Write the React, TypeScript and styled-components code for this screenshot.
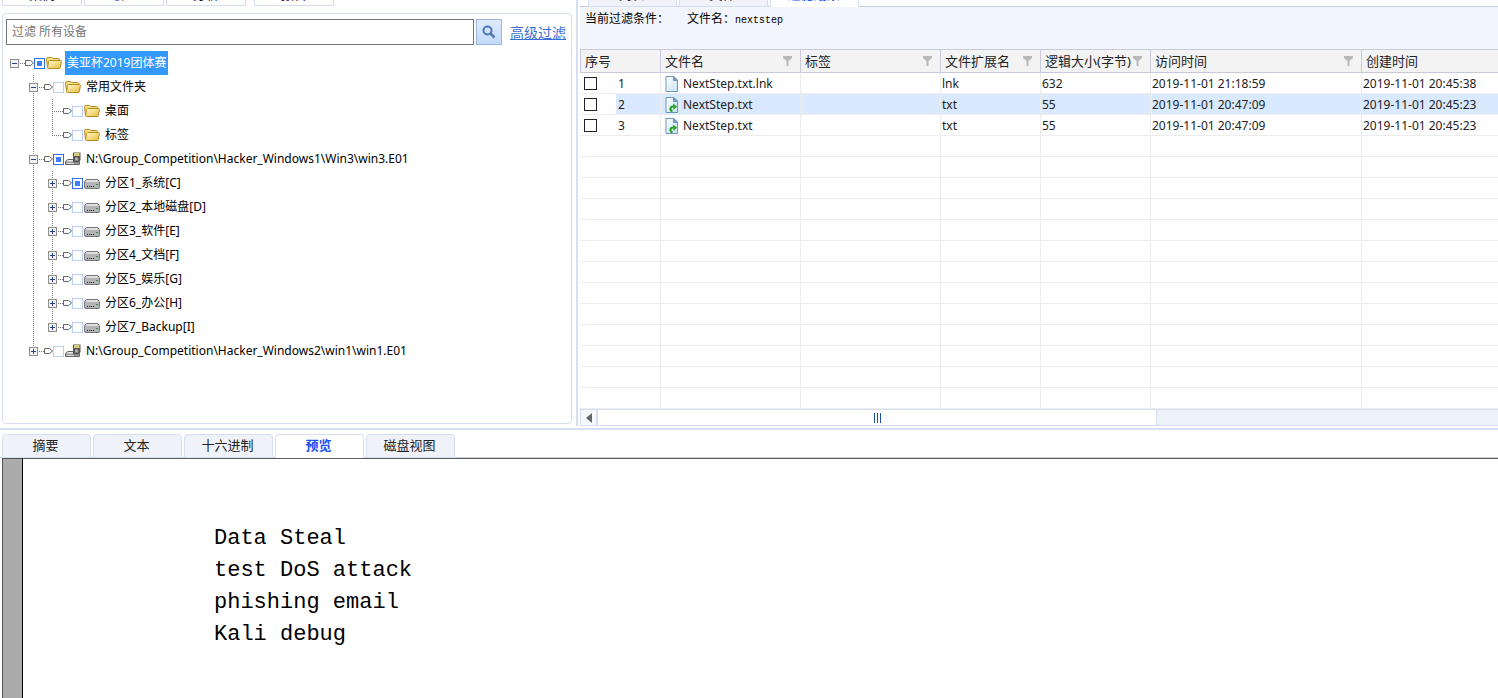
import React from "react";
import styled, { createGlobalStyle, css } from "styled-components";

const line = "#d5dff1";
const ui = `"Noto Sans", "Noto Sans CJK SC", sans-serif`;

const GlobalStyle = createGlobalStyle`
  *, *::before, *::after { box-sizing: border-box; }
  body { margin: 0; background: #fff; color: #000; font: 12px/16px ${ui}; }
  button, input { font: inherit; color: inherit; margin: 0; }
`;

const Page = styled.div`
  display: flex;
  flex-direction: column;
  min-height: 100vh;
  overflow: hidden;
`;

const Workspace = styled.div`
  display: grid;
  grid-template-columns: 578px minmax(0, 1fr);
  column-gap: 2px;
  padding-bottom: 2px;
  border-bottom: 2px solid ${line};
`;

/* ---------- device pane ---------- */

const DevicePane = styled.aside`
  display: flex;
  flex-direction: column;
  gap: 7px;
  padding: 0 4px 2px 2px;
  border-right: 2px solid ${line};
`;

const Toolbar = styled.div`
  display: flex;
  align-items: flex-end;
  gap: 2px;
  height: 6px;
  overflow: hidden;
`;

const ToolButton = styled.button<{ $apart?: boolean }>`
  flex: none;
  width: 80px;
  height: 24px;
  padding: 0;
  margin-left: ${(p) => (p.$apart ? 6 : 0)}px;
  border: 1px solid ${line};
  background: #fff;
  color: #222;
  font-size: 13px;
  line-height: 20px;
`;

const DevicePanel = styled.div`
  flex: 1;
  padding: 5px 5px 4px 3px;
  border: 1px solid ${line};
  border-radius: 4px;
`;

const SearchRow = styled.form`
  display: flex;
  align-items: center;
  gap: 2px;
`;

const SearchInput = styled.input`
  flex: 1;
  min-width: 0;
  height: 26px;
  padding: 0 5px 2px;
  border: 1px solid #767676;
  outline: none;
  &::placeholder { color: #757575; opacity: 1; }
`;

const SearchButton = styled.button`
  display: grid;
  place-items: center;
  width: 26px;
  height: 26px;
  padding: 0;
  border: 1px solid #9bb5dc;
  background: linear-gradient(#dfebfd, #c2dafb);
`;

const AdvancedLink = styled.a`
  margin-left: 6px;
  padding-top: 2px;
  color: #3c6fd6;
  font-size: 14px;
  line-height: 20px;
  text-decoration: underline;
`;

const Tree = styled.ul`
  margin: 6px 0 0 4px;
  padding: 0;
  list-style: none;
`;

const TreeRow = styled.li`
  display: flex;
  align-items: center;
  height: 24px;
`;

const Guide = styled.span<{ $drawn: boolean }>`
  flex: none;
  width: 19px;
  height: 24px;
  ${(p) =>
    p.$drawn &&
    css`
      background: repeating-linear-gradient(#777 0 1px, transparent 1px 2px) 4px 0 / 1px 24px no-repeat;
    `}
`;

const TreeLabel = styled.label`
  display: flex;
  align-items: center;
  gap: 1px;
`;

const TreeCheck = styled.input<{ $partial?: boolean }>`
  appearance: none;
  width: 11px;
  height: 11px;
  border: 1px solid ${(p) => (p.$partial ? "#2f6cf6" : "#b9cffb")};
  background: ${(p) => (p.$partial ? "#3d7dff" : "#fff")};
  box-shadow: inset 0 0 0 2px #fff;
`;

const TreeText = styled.span<{ $selected?: boolean }>`
  margin-left: 2px;
  padding: 0 2px;
  line-height: 24px;
  white-space: nowrap;
  background: ${(p) => (p.$selected ? "#3399ff" : "transparent")};
  color: ${(p) => (p.$selected ? "#fff" : "#000")};
`;

/* ---------- result pane ---------- */

const ResultPane = styled.main`
  min-width: 0;
`;

const TabStrip = styled.div<{ $clipped?: boolean }>`
  display: flex;
  align-items: flex-end;
  gap: 2px;
  height: ${(p) => (p.$clipped ? "7px" : "28px")};
  padding-left: ${(p) => (p.$clipped ? 8 : 2)}px;
  overflow: hidden;
  box-shadow: inset 0 -1px ${(p) => (p.$clipped ? "#c9ccdc" : "#ccd2e2")};
`;

const Tab = styled.button<{ $active?: boolean }>`
  flex: none;
  width: 89px;
  height: 24px;
  padding: 0 2px 2px 0;
  border: 1px solid ${line};
  border-bottom-color: ${(p) => (p.$active ? "#fff" : line)};
  border-radius: 4px 4px 0 0;
  background: ${(p) => (p.$active ? "#fff" : "#eff2f8")};
  color: ${(p) => (p.$active ? "#1b4ff0" : "#222")};
  font-size: 13px;
  font-weight: ${(p) => (p.$active ? 700 : 400)};
  line-height: 20px;
`;

const FilterBar = styled.div`
  display: flex;
  gap: 18px;
  height: 42px;
  padding: 5px 5px 4px;
  background: #f2f5fb;
  font-family: "Liberation Mono", "Noto Sans CJK SC", monospace;
`;

const Keyword = styled.span`
  font-size: 10px;
`;

const ResultTable = styled.table`
  width: 100%;
  table-layout: fixed;
  border-collapse: separate;
  border-spacing: 0;
  color: #222;
`;

const HeadCell = styled.th<{ $width?: number }>`
  width: ${(p) => (p.$width ? `${p.$width}px` : "auto")};
  height: 24px;
  padding: 0 8px 0 4px;
  border: solid #c9c9dc;
  border-width: 1px 1px 1px 0;
  background: #f3f3f3;
  font-size: 13px;
  font-weight: 400;
  line-height: 20px;
  text-align: left;
  &:first-child { border-left-width: 1px; }
  &:last-child { border-right-width: 0; }
`;

const HeadInner = styled.span`
  display: flex;
  align-items: center;
  justify-content: space-between;
  white-space: nowrap;
`;

const BodyRow = styled.tr<{ $selected?: boolean }>`
  background: ${(p) => (p.$selected ? "#d9e9ff" : "#fff")};
`;

const Cell = styled.td`
  height: 21px;
  padding: 2px 0 0 1px;
  border: solid #ececec;
  border-width: 0 1px 1px 0;
  line-height: 18px;
  white-space: nowrap;
  overflow: hidden;
  &:first-child { padding: 0; }
  &:last-child { border-right-width: 0; }
`;

const IndexLabel = styled.label`
  display: flex;
  height: 20px;
`;

const CheckSlot = styled.span`
  display: flex;
  align-items: center;
  width: 36px;
  padding-left: 4px;
  background: #fff;
`;

const RowCheck = styled.input`
  appearance: none;
  width: 13px;
  height: 13px;
  border: 1px solid #222;
  background: #fff;
`;

const IndexText = styled.span`
  padding: 2px 0 0 2px;
`;

const FileName = styled.span`
  display: flex;
  align-items: center;
  gap: 4px;
  padding-left: 3px;
`;

const ScrollBar = styled.div`
  display: flex;
  height: 17px;
  border: solid ${line};
  border-width: 1px 0 1px 1px;
  background: #edf1f8;
`;

const ScrollArrow = styled.button`
  display: grid;
  place-items: center;
  width: 17px;
  padding: 0;
  border: 0;
  border-right: 2px solid ${line};
  background: #f6f8fc;
`;

const ScrollThumb = styled.div`
  display: flex;
  align-items: center;
  justify-content: center;
  gap: 2px;
  width: 61%;
  border-right: 1px solid ${line};
  background: #fff;
`;

const Grip = styled.i`
  width: 1px;
  height: 10px;
  background: #1a4f9e;
`;

/* ---------- preview ---------- */

const PreviewArea = styled.section`
  display: flex;
  flex: 1;
  padding-left: 2px;
`;

const PageMargin = styled.div`
  width: 21px;
  border: solid #555;
  border-width: 1px 1px 0 1px;
  border-right-color: #000;
  background: #ababab;
`;

const Document = styled.pre`
  flex: 1;
  margin: 0;
  padding: 64px 191px 32px;
  border-top: 1px solid #5c5c62;
  background: #fff;
  color: #000;
  font: 22px/32px "Liberation Mono", monospace;
`;

/* ---------- icons ---------- */

type Fold = "open" | "closed" | "leaf";

const Branch = ({ fold, up, down }: { fold: Fold; up?: boolean; down?: boolean }) => (
  <svg width="24" height="24" viewBox="0 0 24 24" shapeRendering="crispEdges" aria-hidden="true">
    {up && <path d="M4.5 0V12" stroke="#777" strokeDasharray="1 1" />}
    {down && <path d="M4.5 12V24" stroke="#777" strokeDasharray="1 1" />}
    <path d={fold === "leaf" ? "M4 12.500H15" : "M10 12.500H15"} stroke="#777" strokeDasharray="1 1" />
    {fold !== "leaf" && (
      <>
        <rect x="0.5" y="8.500" width="8" height="8" rx="1" fill="#f4f4f4" stroke="#8c8c8c" />
        <path d="M2 12.500H7" stroke="#27418c" />
        {fold === "closed" && <path d="M4.5 10V15" stroke="#27418c" />}
      </>
    )}
    <path d="M15.500 9.500H20.500L23.500 12L20.500 14.500H15.500Z" fill="#fff" stroke="#666" shapeRendering="auto" />
  </svg>
);

const FolderIcon = () => (
  <svg width="16" height="16" viewBox="0 0 16 16" aria-hidden="true">
    <defs>
      <linearGradient id="folder" x1="0" y1="0" x2="1" y2="1">
        <stop offset="0" stopColor="#fffbd0" />
        <stop offset="1" stopColor="#e8bc3a" />
      </linearGradient>
    </defs>
    <path d="M1.500 12.500L.5 4Q.5 2.500 2 2.500H5.500Q6.500 2.500 7 3.500H12.500Q13.500 3.500 13.500 5V7" fill="#f9e38a" stroke="#b58a1c" />
    <path d="M3.500 5.500H14.500Q15.500 5.500 15.400 6.500L14.300 12.500Q14.100 13.500 13 13.500H2.500Q1.500 13.500 1.600 12.500L2.500 6.500Q2.600 5.500 3.500 5.500Z" fill="url(#folder)" stroke="#b58a1c" />
  </svg>
);

const DriveIcon = () => (
  <svg width="16" height="16" viewBox="0 0 16 16" aria-hidden="true">
    <path d="M2.500 4.500H13.500L15.500 6.500V12Q15.500 13.500 14 13.500H2Q.5 13.500 .5 12V6.500Z" fill="#b4b4b4" stroke="#777" />
    <path d="M3 5H13L14.500 7H1.500Z" fill="#dedede" />
    <path d="M3 11.500H4M5 11.500H6M7 11.500H8M9 11.500H10" stroke="#222" />
    <path d="M12 9.500H14" stroke="#4a7d3a" />
  </svg>
);

const ImageIcon = () => (
  <svg width="16" height="16" viewBox="0 0 16 16" aria-hidden="true">
    <path d="M3 8.500H9V10.500H14.500V13.500H.5V10.500Z" fill="#9d9d9d" stroke="#666" />
    <path d="M3 9H8L7.500 10.500H1.500Z" fill="#e8e8e8" />
    <path d="M2 12.500H9" stroke="#ddd" />
    <path d="M8 1.500H15.500V9L13.500 11.500H8Z" fill="#5a5a5a" />
    <path d="M9 2H14.500V5H9Z" fill="#d9cd7a" />
    <path d="M10 6.500H13V9.500H10Z" fill="#aaa" />
  </svg>
);

const FileIcon = ({ shortcut }: { shortcut?: boolean }) => (
  <svg width="14" height="16" viewBox="0 0 14 16" aria-hidden="true">
    <defs>
      <linearGradient id="paper" x1="0" y1="0" x2="1" y2="1">
        <stop offset="0" stopColor="#ffffff" />
        <stop offset="1" stopColor="#c9e1f8" />
      </linearGradient>
    </defs>
    <path d="M1 .5H9L12.500 4V15.500H1Z" fill="url(#paper)" stroke="#6f95bd" />
    <path d="M8.500 .5V4.500H12.500Z" fill="#7d9dc0" stroke="#6f95bd" />
    {shortcut && (
      <>
        <path d="M7.500 14.500C4.500 13.500 4.500 9.500 8.500 9.500" fill="none" stroke="#22a31a" strokeWidth="2" />
        <path d="M8 6.500L12 9.500L8.500 13Z" fill="#22a31a" />
      </>
    )}
  </svg>
);

const FunnelIcon = () => (
  <svg width="9" height="10" viewBox="0 0 9 10" aria-hidden="true">
    <path d="M0 0H9V2L5.500 5V10H3.500V5L0 2Z" fill="#b9b9b9" />
  </svg>
);

const SearchIcon = () => (
  <svg width="14" height="14" viewBox="0 0 14 14" fill="none" stroke="#4f76b4" aria-hidden="true">
    <circle cx="5.500" cy="5.500" r="4" strokeWidth="2" />
    <path d="M8.500 8.500L12.500 12.500" strokeWidth="2.500" />
  </svg>
);

/* ---------- data ---------- */

type Node = {
  text: string;
  level: 0 | 1 | 2;
  fold: Fold;
  icon: () => React.ReactElement;
  partial?: boolean;
  selected?: boolean;
  last?: boolean;
};

const partitions: Node[] = ["1_系统[C]", "2_本地磁盘[D]", "3_软件[E]", "4_文档[F]", "5_娱乐[G]", "6_办公[H]", "7_Backup[I]"].map(
  (name, i, all) => ({
    text: `分区${name}`,
    level: 2,
    fold: "closed",
    icon: DriveIcon,
    partial: i === 0,
    last: i === all.length - 1,
  })
);

const nodes: Node[] = [
  { text: "美亚杯2019团体赛", level: 0, fold: "open", icon: FolderIcon, partial: true, selected: true },
  { text: "常用文件夹", level: 1, fold: "open", icon: FolderIcon },
  { text: "桌面", level: 2, fold: "leaf", icon: FolderIcon },
  { text: "标签", level: 2, fold: "leaf", icon: FolderIcon, last: true },
  { text: "N:\\Group_Competition\\Hacker_Windows1\\Win3\\win3.E01", level: 1, fold: "open", icon: ImageIcon, partial: true },
  ...partitions,
  { text: "N:\\Group_Competition\\Hacker_Windows2\\win1\\win1.E01", level: 1, fold: "closed", icon: ImageIcon, last: true },
];

const columns = [
  { title: "序号", width: 81 },
  { title: "文件名", width: 140, filter: true },
  { title: "标签", width: 140, filter: true },
  { title: "文件扩展名", width: 100, filter: true },
  { title: "逻辑大小(字节)", width: 110, filter: true },
  { title: "访问时间", width: 211, filter: true },
  { title: "创建时间" },
];

const files = [
  { name: "NextStep.txt.lnk", ext: "lnk", size: 632, accessed: "2019-11-01 21:18:59", created: "2019-11-01 20:45:38" },
  { name: "NextStep.txt", ext: "txt", size: 55, accessed: "2019-11-01 20:47:09", created: "2019-11-01 20:45:23", selected: true },
  { name: "NextStep.txt", ext: "txt", size: 55, accessed: "2019-11-01 20:47:09", created: "2019-11-01 20:45:23" },
];

const emptyRows = Array.from({ length: 13 }, (_, i) => i);

export default function App() {
  return (
    <Page>
      <GlobalStyle />
      <Workspace>
        <DevicePane>
          <Toolbar>
            <ToolButton>案例</ToolButton>
            <ToolButton>取证</ToolButton>
            <ToolButton>分析</ToolButton>
            <ToolButton $apart>报告</ToolButton>
          </Toolbar>
          <DevicePanel>
            <SearchRow onSubmit={(e) => e.preventDefault()}>
              <SearchInput type="text" placeholder="过滤 所有设备" aria-label="过滤 所有设备" />
              <SearchButton type="submit" aria-label="过滤">
                <SearchIcon />
              </SearchButton>
              <AdvancedLink href="#advanced">高级过滤</AdvancedLink>
            </SearchRow>
            <Tree>
              {nodes.map(({ icon: Icon, ...n }) => (
                <TreeRow key={n.text}>
                  {n.level > 0 && <Guide $drawn={false} />}
                  {n.level > 1 && <Guide $drawn />}
                  <Branch fold={n.fold} up={n.level > 0} down={n.level > 0 && !n.last} />
                  <TreeLabel>
                    <TreeCheck type="checkbox" $partial={n.partial} />
                    <Icon />
                    <TreeText $selected={n.selected}>{n.text}</TreeText>
                  </TreeLabel>
                </TreeRow>
              ))}
            </Tree>
          </DevicePanel>
        </DevicePane>

        <ResultPane>
          <TabStrip $clipped>
            <Tab>列表</Tab>
            <Tab>文件</Tab>
            <Tab $active>过滤结果</Tab>
          </TabStrip>
          <FilterBar>
            <span>当前过滤条件：</span>
            <span>
              文件名：<Keyword>nextstep</Keyword>
            </span>
          </FilterBar>
          <ResultTable>
            <thead>
              <tr>
                {columns.map((c) => (
                  <HeadCell key={c.title} $width={c.width} scope="col">
                    <HeadInner>
                      {c.title}
                      {c.filter && <FunnelIcon />}
                    </HeadInner>
                  </HeadCell>
                ))}
              </tr>
            </thead>
            <tbody>
              {files.map((f, i) => (
                <BodyRow key={i} $selected={f.selected}>
                  <Cell>
                    <IndexLabel>
                      <CheckSlot>
                        <RowCheck type="checkbox" />
                      </CheckSlot>
                      <IndexText>{i + 1}</IndexText>
                    </IndexLabel>
                  </Cell>
                  <Cell>
                    <FileName>
                      <FileIcon shortcut={i > 0} />
                      {f.name}
                    </FileName>
                  </Cell>
                  <Cell />
                  <Cell>{f.ext}</Cell>
                  <Cell>{f.size}</Cell>
                  <Cell>{f.accessed}</Cell>
                  <Cell>{f.created}</Cell>
                </BodyRow>
              ))}
              {emptyRows.map((r) => (
                <BodyRow key={r}>
                  {columns.map((c) => (
                    <Cell key={c.title} />
                  ))}
                </BodyRow>
              ))}
            </tbody>
          </ResultTable>
          <ScrollBar>
            <ScrollArrow aria-label="向左滚动">
              <svg width="6" height="10" viewBox="0 0 6 10" aria-hidden="true">
                <path d="M6 0V10L0 5Z" fill="#666" />
              </svg>
            </ScrollArrow>
            <ScrollThumb>
              <Grip />
              <Grip />
              <Grip />
            </ScrollThumb>
          </ScrollBar>
        </ResultPane>
      </Workspace>

      <TabStrip>
        <Tab>摘要</Tab>
        <Tab>文本</Tab>
        <Tab>十六进制</Tab>
        <Tab $active>预览</Tab>
        <Tab>磁盘视图</Tab>
      </TabStrip>
      <PreviewArea>
        <PageMargin />
        <Document>{"Data Steal\ntest DoS attack\nphishing email\nKali debug"}</Document>
      </PreviewArea>
    </Page>
  );
}
